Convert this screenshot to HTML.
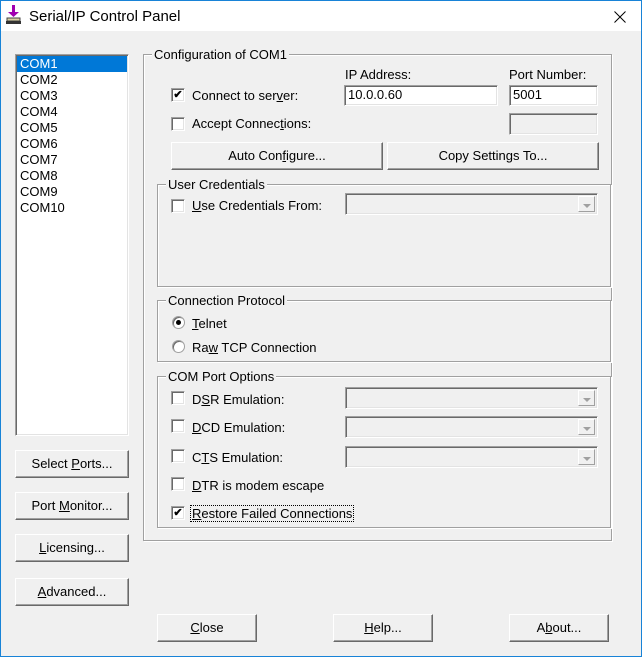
<!DOCTYPE html>
<html><head><meta charset="utf-8"><style>
*{box-sizing:border-box;margin:0;padding:0}
body{width:642px;height:657px;overflow:hidden;background:#f0f0f0;font-family:"Liberation Sans",Arial,sans-serif;font-size:13px;color:#000;position:relative}
.a{position:absolute}
.win{position:absolute;left:0;top:0;width:642px;height:657px;border:1px solid #1883d7;border-top:none}
.title{position:absolute;left:0;top:0;width:642px;height:31px;background:#fff;border-top:1px solid #1883d7}
.t{position:absolute;white-space:nowrap;line-height:15px}
.btn{position:absolute;background:#f0f0f0;border-top:1px solid #fff;border-left:1px solid #fff;border-right:1px solid #696969;border-bottom:1px solid #696969;box-shadow:inset -1px -1px 0 #a0a0a0;text-align:center;line-height:25px;white-space:nowrap}
.grp{position:absolute;border:1px solid #a0a0a0;box-shadow:inset 1px 1px 0 #fff,1px 1px 0 #fff}
.lg{position:absolute;top:-8px;left:8px;background:#f0f0f0;padding:0 2px;line-height:15px;white-space:nowrap}
.cb{position:absolute;width:14px;height:14px;background:#fff;border-top:1px solid #a0a0a0;border-left:1px solid #a0a0a0;border-right:1px solid #fff;border-bottom:1px solid #fff;box-shadow:inset 1px 1px 0 #696969,inset -1px -1px 0 #e3e3e3;font-size:11px;line-height:12px;text-align:center;font-weight:bold}
.ed{position:absolute;background:#fff;border-top:1px solid #a0a0a0;border-left:1px solid #a0a0a0;border-right:1px solid #fff;border-bottom:1px solid #fff;box-shadow:inset 1px 1px 0 #696969,inset -1px -1px 0 #e3e3e3;padding-left:3px;line-height:18px}
.dis{background:#f0f0f0}
.dd{position:absolute;right:2px;top:2px;width:17px;bottom:2px;background:#f0f0f0;border-right:1px solid #a0a0a0;border-bottom:1px solid #a0a0a0;border-top:1px solid #fff;border-left:1px solid #fff}
.dd:after{content:"";position:absolute;left:4px;top:7px;border-left:4px solid transparent;border-right:4px solid transparent;border-top:4px solid #a0a0a0}
.rd{position:absolute;width:13px;height:13px;border-radius:50%;background:#fff;border:1px solid #a0a0a0;box-shadow:inset 1px 1px 0 #696969}
u{text-decoration:underline}
</style></head><body>
<div class="title">
 <svg class="a" style="left:5px;top:4px" width="18" height="20" viewBox="0 0 18 20"><rect x="7" y="0" width="3" height="8" fill="#a000b0"/><path d="M3 7h11l-5.5 5z" fill="#a000b0"/><rect x="2" y="13" width="13" height="3" fill="#d8d0a0" stroke="#444" stroke-width="1"/><rect x="1" y="16" width="15" height="3" fill="#333"/></svg>
 <div class="t" style="left:29px;top:7px;font-size:15px;line-height:17px">Serial/IP Control Panel</div>
 <svg class="a" style="left:614px;top:10px" width="12" height="12"><path d="M0.5 0.5L11.5 11.5M11.5 0.5L0.5 11.5" stroke="#000" stroke-width="1"/></svg>
</div>
<div class="win"></div>

<div class="ed" style="left:15px;top:54px;width:114px;height:382px;padding:1px;line-height:16px">
 <div style="background:#0078d7;color:#fff;padding-left:3px">COM1</div>
 <div style="padding-left:3px">COM2</div><div style="padding-left:3px">COM3</div><div style="padding-left:3px">COM4</div><div style="padding-left:3px">COM5</div><div style="padding-left:3px">COM6</div><div style="padding-left:3px">COM7</div><div style="padding-left:3px">COM8</div><div style="padding-left:3px">COM9</div><div style="padding-left:3px">COM10</div>
</div>
<div class="btn" style="left:15px;top:450px;width:114px;height:28px">Select <u>P</u>orts...</div>
<div class="btn" style="left:15px;top:492px;width:114px;height:28px">Port <u>M</u>onitor...</div>
<div class="btn" style="left:15px;top:534px;width:114px;height:28px"><u>L</u>icensing...</div>
<div class="btn" style="left:15px;top:578px;width:114px;height:28px"><u>A</u>dvanced...</div>

<div class="grp" style="left:143px;top:54px;width:469px;height:487px"><div class="lg">Configuration of COM1</div></div>
<div class="t" style="left:345px;top:67px">IP Address:</div>
<div class="t" style="left:509px;top:67px">Port Number:</div>
<div class="cb" style="left:171px;top:88px">✔</div><div class="t" style="left:192px;top:88px">Connect to ser<u>v</u>er:</div>
<div class="ed" style="left:344px;top:85px;width:154px;height:21px">10.0.0.60</div>
<div class="ed" style="left:509px;top:85px;width:89px;height:21px">5001</div>
<div class="cb" style="left:171px;top:117px"></div><div class="t" style="left:192px;top:116px">Accept Connec<u>t</u>ions:</div>
<div class="ed dis" style="left:509px;top:113px;width:89px;height:22px"></div>
<div class="btn" style="left:171px;top:142px;width:212px;height:28px">Auto Con<u>f</u>igure...</div>
<div class="btn" style="left:387px;top:142px;width:212px;height:28px">Copy Settings To...</div>

<div class="grp" style="left:157px;top:184px;width:454px;height:103px"><div class="lg" style="left:8px">User Credentials</div></div>
<div class="cb" style="left:171px;top:199px"></div><div class="t" style="left:192px;top:198px"><u>U</u>se Credentials From:</div>
<div class="ed dis" style="left:345px;top:193px;width:253px;height:22px"><div class="dd"></div></div>

<div class="grp" style="left:157px;top:300px;width:454px;height:62px"><div class="lg">Connection Protocol</div></div>
<div class="rd" style="left:172px;top:316px"><div class="a" style="left:3px;top:3px;width:5px;height:5px;border-radius:50%;background:#000"></div></div>
<div class="t" style="left:192px;top:316px"><u>T</u>elnet</div>
<div class="rd" style="left:172px;top:340px"></div>
<div class="t" style="left:192px;top:340px">Ra<u>w</u> TCP Connection</div>

<div class="grp" style="left:157px;top:376px;width:454px;height:152px"><div class="lg">COM Port Options</div></div>
<div class="cb" style="left:171px;top:391px"></div><div class="t" style="left:192px;top:392px">D<u>S</u>R Emulation:</div>
<div class="ed dis" style="left:345px;top:387px;width:253px;height:22px"><div class="dd"></div></div>
<div class="cb" style="left:171px;top:419px"></div><div class="t" style="left:192px;top:420px"><u>D</u>CD Emulation:</div>
<div class="ed dis" style="left:345px;top:416px;width:253px;height:22px"><div class="dd"></div></div>
<div class="cb" style="left:171px;top:449px"></div><div class="t" style="left:192px;top:450px">C<u>T</u>S Emulation:</div>
<div class="ed dis" style="left:345px;top:446px;width:253px;height:22px"><div class="dd"></div></div>
<div class="cb" style="left:171px;top:477px"></div><div class="t" style="left:192px;top:478px"><u>D</u>TR is modem escape</div>
<div class="cb" style="left:171px;top:506px">✔</div><div class="t" style="left:191px;top:506px;outline:1px dotted #000;padding:0 1px"><u>R</u>estore Failed Connections</div>

<div class="btn" style="left:157px;top:614px;width:100px;height:28px"><u>C</u>lose</div>
<div class="btn" style="left:333px;top:614px;width:100px;height:28px"><u>H</u>elp...</div>
<div class="btn" style="left:509px;top:614px;width:100px;height:28px">A<u>b</u>out...</div>
</body></html>
